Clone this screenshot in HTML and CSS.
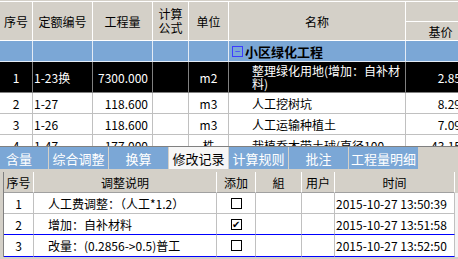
FILE: index.html
```html
<!DOCTYPE html>
<html lang="zh-CN">
<head>
    <meta charset="UTF-8">
    <meta name="viewport" content="width=device-width, initial-scale=1.0">
    <title>定额</title>
    <link rel="stylesheet" href="styles.css">
</head>
<body>

    <div class="quota">
        <div class="quota-edge"></div>
        <div class="quota-head">
            <div class="hc span">序号</div>
            <div class="hc span">定额编号</div>
            <div class="hc span">工程量</div>
            <div class="hc span two">计算<br>公式</div>
            <div class="hc span">单位</div>
            <div class="hc span">名称</div>
            <div class="hc"></div>
            <div class="hc">基价</div>
        </div>

        <div class="qrow group">
            <div class="c"></div>
            <div class="c"></div>
            <div class="c"></div>
            <div class="c"></div>
            <div class="c"></div>
            <div class="c name"><span class="fold">−</span><b>小区绿化工程</b></div>
            <div class="c"></div>
        </div>

        <div class="qrow selected tall">
            <div class="c mid">1</div>
            <div class="c">1-23换</div>
            <div class="c num">7300.000</div>
            <div class="c"></div>
            <div class="c mid">m2</div>
            <div class="c name wrap">整理绿化用地(增加：自补材料)</div>
            <div class="c num">2.85</div>
        </div>

        <div class="qrow">
            <div class="c mid">2</div>
            <div class="c">1-27</div>
            <div class="c num">118.600</div>
            <div class="c"></div>
            <div class="c mid">m3</div>
            <div class="c name">人工挖树坑</div>
            <div class="c num">8.29</div>
        </div>

        <div class="qrow">
            <div class="c mid">3</div>
            <div class="c">1-26</div>
            <div class="c num">118.600</div>
            <div class="c"></div>
            <div class="c mid">m3</div>
            <div class="c name">人工运输种植土</div>
            <div class="c num">7.09</div>
        </div>

        <div class="qrow">
            <div class="c mid">4</div>
            <div class="c">1-47</div>
            <div class="c num">177.000</div>
            <div class="c"></div>
            <div class="c mid">株</div>
            <div class="c name">栽植乔木带土球(直径100</div>
            <div class="c num">43.15</div>
        </div>
    </div>

    <div class="tabs">
        <div class="tab first">含量</div>
        <div class="tab">综合调整</div>
        <div class="tab">换算</div>
        <div class="tab active">修改记录</div>
        <div class="tab">计算规则</div>
        <div class="tab">批注</div>
        <div class="tab wide">工程量明细</div>
    </div>

    <div class="log">
        <div class="lrow log-head">
            <div class="ind"></div>
            <div class="hc">序号</div>
            <div class="hc">调整说明</div>
            <div class="hc">添加</div>
            <div class="hc">組</div>
            <div class="hc">用户</div>
            <div class="hc">时间</div>
            <div class="rest"></div>
        </div>
        <div class="lrow">
            <div class="ind"></div>
            <div class="c mid">1</div>
            <div class="c desc">人工费调整：（人工*1.2）</div>
            <div class="c mid"><span class="box"></span></div>
            <div class="c"></div>
            <div class="c"></div>
            <div class="c">2015-10-27 13:50:39</div>
            <div class="rest"></div>
        </div>
        <div class="lrow before-current">
            <div class="ind"></div>
            <div class="c mid">2</div>
            <div class="c desc">增加：自补材料</div>
            <div class="c mid"><span class="box">✔</span></div>
            <div class="c"></div>
            <div class="c"></div>
            <div class="c">2015-10-27 13:51:58</div>
            <div class="rest"></div>
        </div>
        <div class="lrow current">
            <div class="ind"></div>
            <div class="c mid">3</div>
            <div class="c desc">改量：(0.2856-&gt;0.5)普工</div>
            <div class="c mid"><span class="box"></span></div>
            <div class="c"></div>
            <div class="c"></div>
            <div class="c">2015-10-27 13:52:50</div>
            <div class="rest"></div>
        </div>
    </div>

</body>
</html>
```

FILE: styles.css
```css
body {
    margin: 0;
    width: 458px;
    height: 259px;
    overflow: hidden;
    background-color: #d4d0c8;
    color: #000;
    font-family: "Noto Sans CJK SC", sans-serif;
    font-size: 12px;
}

/* upper grid: quota list */
.quota {
    height: 147px;
    overflow: hidden;
    box-sizing: border-box;
    border-bottom: 1px solid #808080;
    background-color: #fff;
}

.quota-edge {
    height: 2px;
    background-color: #d4d0c8;
    border-bottom: 1px solid #fff;
    box-sizing: border-box;
}

.quota-head,
.qrow {
    display: grid;
    grid-template-columns: 33px 60px 60px 36px 40px 177px 70px;
}

.quota-head {
    grid-template-rows: 20px 19px;
    background-color: #d4d0c8;
}

.hc {
    display: flex;
    align-items: center;
    justify-content: center;
    box-sizing: border-box;
    border-right: 1px solid #fff;
    border-bottom: 1px solid #fff;
    white-space: nowrap;
    overflow: hidden;
}

.hc.span {
    grid-row: span 2;
}

.hc.two {
    line-height: 14px;
    text-align: center;
}

.qrow {
    height: 21px;
}

.qrow.tall {
    height: 31px;
}

.c {
    display: flex;
    align-items: center;
    box-sizing: border-box;
    border-right: 1px solid #c0c0c0;
    border-bottom: 1px solid #c0c0c0;
    white-space: nowrap;
    overflow: hidden;
    padding-left: 1px;
}

.c.mid {
    justify-content: center;
    padding-left: 0;
}

.c.num {
    justify-content: flex-end;
    padding-right: 4px;
}

.qrow .c:last-child {
    justify-content: flex-end;
    padding-right: 14px;
}

.c.name {
    padding-left: 23px;
}

.c.wrap {
    white-space: normal;
    line-height: 13px;
    padding-right: 2px;
}

.qrow.group .c {
    background-color: #7ba7d6;
    border-color: #e4ecf6;
}

.qrow.group .c.name {
    padding-left: 3px;
    font-size: 13px;
}

.fold {
    display: inline-flex;
    align-items: center;
    justify-content: center;
    width: 9px;
    height: 9px;
    margin-right: 2px;
    border: 1px solid #3c3cff;
    color: #3c3cff;
    font-size: 10px;
    line-height: 1;
}

.qrow.selected .c {
    background-color: #000;
    color: #fff;
    border-color: #808080;
}

/* tab strip */
.tabs {
    display: flex;
    gap: 1px;
    height: 22px;
    margin-bottom: 3px;
}

.tab {
    width: 59px;
    display: flex;
    align-items: center;
    justify-content: center;
    background-color: #7ba7d6;
    color: #fff;
    font-size: 13px;
}

.tab.first {
    width: 48px;
    justify-content: flex-start;
    padding-left: 6px;
    box-sizing: border-box;
}

.tab.wide {
    width: 69px;
}

.tab.active {
    background-color: #f6f6f6;
    color: #000;
}

/* lower grid: change log */
.log {
    background-color: #fff;
}

.lrow {
    display: grid;
    grid-template-columns: 4px 30px 183px 39px 46px 33px 120px 1fr;
    height: 21px;
}

.log-head {
    background-color: #d4d0c8;
}

.log-head .hc {
    border-right-color: #fff;
    border-bottom: 1px solid #a0a0a0;
}

.ind {
    background-color: #d4d0c8;
    border-right: 1px solid #808080;
}

.rest {
    background-color: #f4f4f4;
}

.log-head .rest {
    background-color: #d4d0c8;
}

.c.desc {
    padding-left: 14px;
}

.box {
    display: inline-flex;
    align-items: center;
    justify-content: center;
    width: 11px;
    height: 11px;
    box-sizing: border-box;
    border: 1px solid #000;
    background-color: #fff;
    font-size: 10px;
    line-height: 1;
}

.lrow.before-current .c {
    border-bottom-color: #0000ff;
}

.lrow.current {
    height: 22px;
}

.lrow.current .c {
    border-bottom: 1px solid #0000ff;
}
```
